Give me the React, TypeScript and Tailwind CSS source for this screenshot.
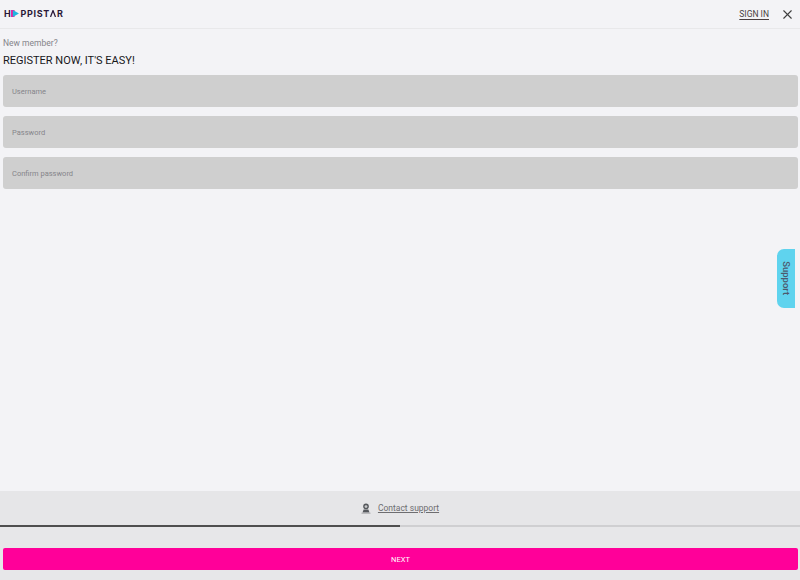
import { X } from 'lucide-react';

function Logo() {
  return (
    <div className="mb-[1px] flex items-center text-[9px] font-bold leading-none tracking-[0.7px] text-[#2a1838] font-['Inter',sans-serif]">
      <span>H</span>
      <svg width="8" height="7" viewBox="0 0 9 8" className="mr-[1px]">
        <path d="M0 0 L4 0 L4 8 L0 8 Z" fill="#ec1a9a" />
        <path d="M2 0 L9 4 L2 8 Z" fill="#1fb6e0" />
      </svg>
      <span>PPIST</span>
      <svg width="6" height="7" viewBox="0 0 7 8" className="mr-[1px]">
        <path d="M0.6 8 L3.5 0.6 L6.4 8" fill="none" stroke="#2a1838" strokeWidth="1.5" />
      </svg>
      <span>R</span>
    </div>
  );
}

function Field({ label }: { label: string }) {
  return (
    <div className="flex h-8 items-center rounded-[3px] bg-[#cfcfcf] px-[9px] pt-[1px] text-[7.5px] text-[#85858a]">
      {label}
    </div>
  );
}

function SupportIcon() {
  return (
    <svg width="10" height="11" viewBox="0 0 10 11">
      <circle cx="5" cy="3.4" r="2.8" fill="#55585c" />
      <circle cx="5" cy="3.6" r="1.4" fill="#c9c9cb" />
      <path d="M1.5 9.6 L2.6 6.4 L7.4 6.4 L8.5 9.6 Z" fill="#55585c" />
      <path d="M0.5 10.2 H9.5" stroke="#a8a8aa" strokeWidth="1" />
    </svg>
  );
}

export default function App() {
  return (
    <div className="relative flex h-[580px] w-[800px] flex-col overflow-hidden bg-[#f3f3f6] font-['Roboto',sans-serif]">
      <header className="flex h-[29px] items-center justify-between border-b border-[#e8e8ea] pl-[4px] pr-[5px]">
        <Logo />
        <div className="flex items-center gap-[11px]">
          <a className="text-[8.5px] leading-none text-[#4a3f3f] underline underline-offset-2">SIGN IN</a>
          <X className="h-[15px] w-[15px] text-[#3f3f3f]" strokeWidth={1.8} />
        </div>
      </header>

      <main className="flex flex-1 flex-col pl-[3px] pr-[2px]">
        <p className="mt-[9px] text-[8.5px] leading-[11px] text-[#84848a]">New member?</p>
        <h1 className="mt-[5px] text-[11px] leading-[14px] text-[#17171a]">REGISTER NOW, IT'S EASY!</h1>
        <div className="mt-[7px] flex flex-col gap-[9px]">
          <Field label="Username" />
          <Field label="Password" />
          <Field label="Confirm password" />
        </div>
      </main>

      <div className="absolute right-[5px] top-[249px] flex h-[59px] w-[18px] items-center justify-center rounded-l-[7px] bg-[#5fd3ee]">
        <span className="rotate-90 whitespace-nowrap text-[9.5px] font-medium text-[#4d5a6e]">Support</span>
      </div>

      <footer className="flex flex-col bg-[#e7e7e9]">
        <div className="flex h-[34px] items-center justify-center gap-[7px] bg-[#e6e6e8] pt-[1px]">
          <SupportIcon />
          <a className="text-[8.5px] text-[#6d6d70] underline underline-offset-1">Contact support</a>
        </div>
        <div className="h-[2px] w-full bg-[#cfcfd1]">
          <div className="h-full w-1/2 bg-[#4f4f4f]" />
        </div>
        <div className="pb-[10px] pl-[3px] pr-[2px] pt-[21px]">
          <button className="flex h-[22px] w-full items-center justify-center rounded-[2px] bg-[#ff0099] pt-[1px] text-[7.5px] text-white">
            NEXT
          </button>
        </div>
      </footer>
    </div>
  );
}
